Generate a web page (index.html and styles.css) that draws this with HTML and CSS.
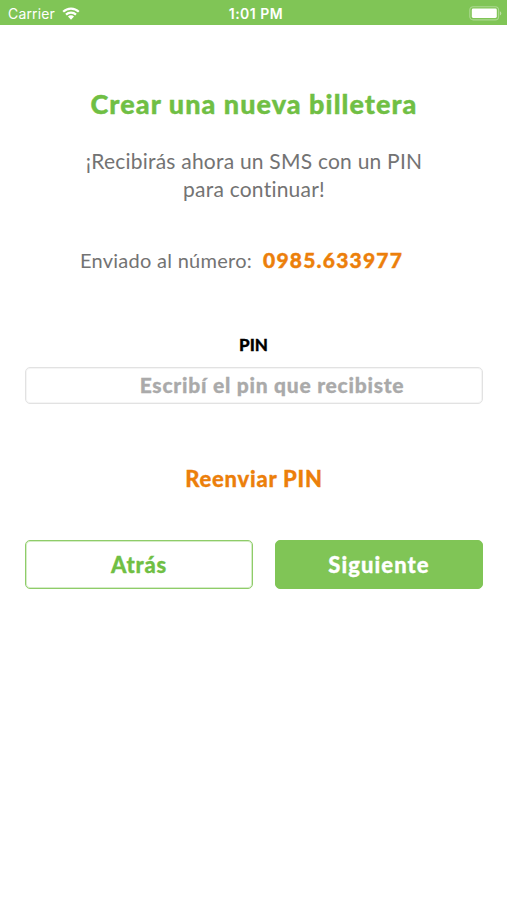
FILE: index.html
```html
<!DOCTYPE html>
<html lang="es">
<head>
<meta charset="utf-8">
<title>Crear una nueva billetera</title>
<link rel="stylesheet" href="styles.css">
</head>
<body>
<header class="status">
  <div class="status-left"><span class="carrier">Carrier</span>
    <svg class="wifi" viewBox="0 0 18 13" width="18" height="13"><path d="M1.2 4.8a11 11 0 0 1 15.6 0M4 7.6a7.1 7.1 0 0 1 10 0" fill="none" stroke="#fff" stroke-width="2.2"/><path d="M9 12.8 6 9.6a4.2 4.2 0 0 1 6 0z" fill="#fff"/></svg>
  </div>
  <span class="time">1:01 PM</span>
  <svg class="battery" viewBox="0 0 33 15" width="33" height="15"><rect x=".8" y=".7" width="28.8" height="13.2" rx="3.4" fill="none" stroke="#fff" stroke-opacity=".35" stroke-width="1.1"/><rect x="2.8" y="2.6" width="25" height="9.4" rx="1.4" fill="#fff"/><path d="M30.9 5.3q1.4.6 1.4 2.1t-1.4 2.1z" fill="#fff" fill-opacity=".45"/></svg>
</header>
<main class="screen">
  <h1 class="title">Crear una nueva billetera</h1>
  <p class="intro">¡Recibirás ahora un SMS con un PIN<br>para continuar!</p>
  <p class="sent"><span class="sent-label">Enviado al número:</span><strong class="phone">0985.633977</strong></p>
  <label class="pin-label" for="pin">PIN</label>
  <input class="field" id="pin" type="text" placeholder="Escribí el pin que recibiste">
  <a class="resend">Reenviar PIN</a>
  <div class="actions">
    <button class="btn btn-back">Atrás</button>
    <button class="btn btn-next">Siguiente</button>
  </div>
</main>
</body>
</html>
```
FILE: styles.css
```css
* { box-sizing: border-box; }
body { margin: 0; background: #fff; font-family: Lato, sans-serif; color: #737373; font-variant-ligatures: none; }
.status { display: grid; grid-template-columns: 1fr auto 1fr; align-items: center; height: 25px; padding: 2px 5px 0 8px; background: #80c556; color: #fff; font: 14px/20px Inter, sans-serif; }
.status-left { display: flex; align-items: center; gap: 7px; }
.carrier { letter-spacing: .15px; }
.time { margin-left: 2px; font-weight: 600; font-size: 14px; letter-spacing: .5px; }
.battery { justify-self: end; }
.screen { padding: 62px 24px 0 25px; text-align: center; }
.title { margin: 0; font-size: 27px; line-height: 34px; font-weight: 900; letter-spacing: 1.05px; color: #70bf44; -webkit-text-stroke: .4px; }
.intro { margin: 26px 0 0; font-size: 21px; line-height: 28px; letter-spacing: .22px; }
.sent { display: flex; justify-content: center; align-items: baseline; gap: 11px; margin: 43px 25px 0 0; font-size: 20px; line-height: 28px; }
.sent-label { letter-spacing: .27px; }
.phone { font-size: 21px; font-weight: 900; letter-spacing: 1.2px; color: #ec7f0b; -webkit-text-stroke: .4px; }
.pin-label { display: block; margin-top: 59px; padding-right: 1px; font-size: 17px; line-height: 24px; font-weight: 900; color: #000; -webkit-text-stroke: .3px; }
.field { display: block; width: 100%; height: 37px; margin-top: 10px; padding: 0 0 3px 36px; border: 1px solid #e2e2e2; box-shadow: inset 0 0 0 1px #f5f5f5; border-radius: 5px; background: #fff; text-align: center; font: 900 21px/32px Lato, sans-serif; letter-spacing: .75px; font-variant-ligatures: none; color: #555; }
.field::placeholder { color: #aaa; opacity: 1; -webkit-text-stroke: .3px; }
.resend { display: block; margin-top: 61px; font-size: 22px; line-height: 28px; font-weight: 900; letter-spacing: .75px; color: #ec7f0b; -webkit-text-stroke: .3px; }
.actions { display: grid; grid-template-columns: 228px 208px; justify-content: space-between; margin-top: 47px; }
.btn { height: 49px; padding: 0; border: 1px solid #8fcc69; box-shadow: inset 0 0 0 1px #d5edc8; border-radius: 5px; background: #fff; color: #70bf44; font: 900 22px/44px Lato, sans-serif; letter-spacing: .75px; -webkit-text-stroke: .3px; }
.btn-next { border-color: #80c556; box-shadow: none; background: #80c556; color: #fff; letter-spacing: 1.05px; }
```
